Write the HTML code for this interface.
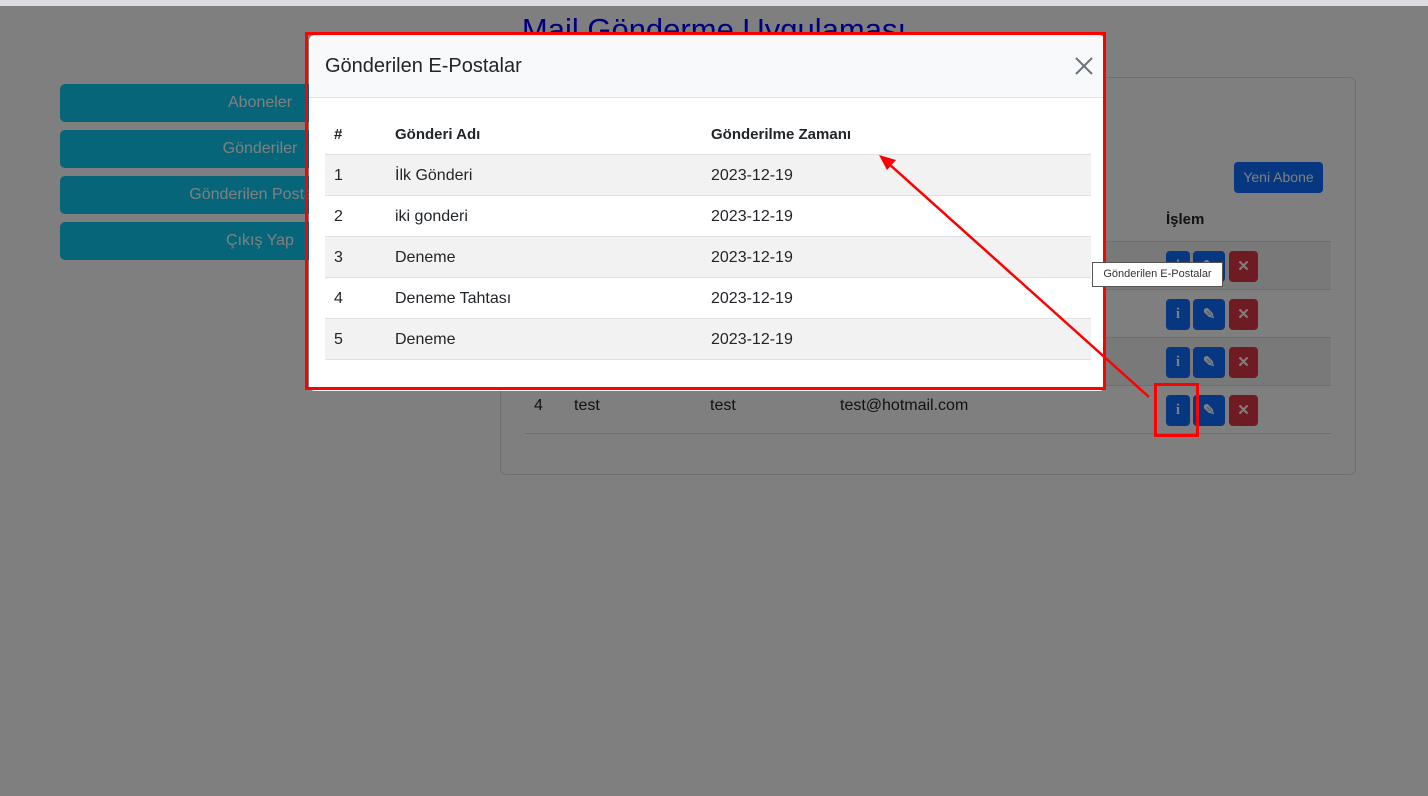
<!DOCTYPE html>
<html><head><meta charset="utf-8"><style>
*{box-sizing:border-box;margin:0;padding:0}
body{width:1428px;height:796px;overflow:hidden;background:#7f7f7f;font-family:"Liberation Sans",sans-serif;position:relative;color:#212529}
.a{position:absolute}
.topbar{left:0;top:0;width:1428px;height:6px;background:#dadce0;z-index:20}
.title{top:12px;left:0;width:1428px;text-align:center;font-size:31px;color:#000080}
.sb{left:60px;width:400px;height:38px;background:#07657a;border-radius:5px;color:#808080;font-size:16px;text-align:center;line-height:38px}
.card{left:500px;top:77px;width:856px;height:398px;border:1px solid #6f6f6f;border-radius:6px}
.btn{height:31px;border-radius:4px;color:#808080;text-align:center;line-height:31px;font-weight:bold;font-size:15px}
.row{left:525px;width:806px;height:48px;border-bottom:1px solid #6f6f6f}
.modal{left:309px;top:35px;width:796px;height:356px;background:#fff;border-radius:6px;overflow:hidden}
.mh{height:63px;background:#f8f9fa;border-bottom:1px solid #dee2e6;position:relative}
.mh span{position:absolute;left:16px;top:20px;font-size:20px;color:#212529}
.mt{position:absolute;left:16px;top:79px;width:766px;font-size:16px}
.tr{height:41px;border-bottom:1px solid #dee2e6;position:relative;line-height:41px}
.tr.s{background:#f2f2f2}
.tr span{position:absolute}
.c1{left:9px}.c2{left:70px}.c3{left:386px}
.th{font-weight:bold;font-size:15px}
.bl{background:#073780}.rd{background:#6e1b23}
</style></head><body>
<div class="a topbar"></div>
<div class="a title">Mail Gönderme Uygulaması</div>
<div class="a sb" style="top:84px">Aboneler</div>
<div class="a sb" style="top:130px">Gönderiler</div>
<div class="a sb" style="top:176px">Gönderilen Postalar</div>
<div class="a sb" style="top:222px">Çıkış Yap</div>
<div class="a card"></div>
<div class="a btn bl" style="left:1234px;top:162px;width:89px;font-weight:normal;font-size:14px">Yeni Abone</div>
<div class="a" style="left:1166px;top:211px;font-weight:bold;font-size:15px;color:#111">İşlem</div>
<div class="a" style="left:525px;top:241px;width:806px;height:1px;background:#6f6f6f"></div>
<div class="a row" style="top:242px;background:#797979"></div>
<div class="a row" style="top:290px"></div>
<div class="a row" style="top:338px;background:#797979"></div>
<div class="a row" style="top:386px"></div>
<div class="a" style="left:534px;top:397px;font-size:16px;color:#111">4</div>
<div class="a" style="left:574px;top:397px;font-size:16px;color:#111">test</div>
<div class="a" style="left:710px;top:397px;font-size:16px;color:#111">test</div>
<div class="a" style="left:840px;top:397px;font-size:16px;color:#111">test@hotmail.com</div>
<div class="a" style="left:1166px;top:251px">
<div class="a btn bl" style="left:0;top:0;width:24px;font-family:'Liberation Serif',serif">i</div>
<div class="a btn bl" style="left:27px;top:0;width:32px">✎</div>
<div class="a btn rd" style="left:63px;top:0;width:29px">✕</div>
<div class="a btn bl" style="left:0;top:48px;width:24px;font-family:'Liberation Serif',serif">i</div>
<div class="a btn bl" style="left:27px;top:48px;width:32px">✎</div>
<div class="a btn rd" style="left:63px;top:48px;width:29px">✕</div>
<div class="a btn bl" style="left:0;top:96px;width:24px;font-family:'Liberation Serif',serif">i</div>
<div class="a btn bl" style="left:27px;top:96px;width:32px">✎</div>
<div class="a btn rd" style="left:63px;top:96px;width:29px">✕</div>
<div class="a btn bl" style="left:0;top:144px;width:24px;font-family:'Liberation Serif',serif">i</div>
<div class="a btn bl" style="left:27px;top:144px;width:32px">✎</div>
<div class="a btn rd" style="left:63px;top:144px;width:29px">✕</div>
</div>
<div class="a modal">
<div class="mh"><span>Gönderilen E-Postalar</span>
<svg class="a" style="left:766px;top:22px" width="18" height="18"><path d="M1 1L17 17M17 1L1 17" stroke="#6c757d" stroke-width="2"/></svg></div>
<div class="mt">
<div class="tr th"><span class="c1">#</span><span class="c2">Gönderi Adı</span><span class="c3">Gönderilme Zamanı</span></div>
<div class="tr s"><span class="c1">1</span><span class="c2">İlk Gönderi</span><span class="c3">2023-12-19</span></div>
<div class="tr"><span class="c1">2</span><span class="c2">iki gonderi</span><span class="c3">2023-12-19</span></div>
<div class="tr s"><span class="c1">3</span><span class="c2">Deneme</span><span class="c3">2023-12-19</span></div>
<div class="tr"><span class="c1">4</span><span class="c2">Deneme Tahtası</span><span class="c3">2023-12-19</span></div>
<div class="tr s"><span class="c1">5</span><span class="c2">Deneme</span><span class="c3">2023-12-19</span></div>
</div>
</div>
<div class="a" style="left:305px;top:32px;width:801px;height:358px;border:3px solid #ff0000"></div>
<div class="a" style="left:1154px;top:383px;width:45px;height:54px;border:3px solid #ff0000"></div>
<div class="a" style="left:1092px;top:262px;width:131px;height:25px;background:#fff;border:1px solid #555;font-size:11px;line-height:23px;text-align:center;color:#333">Gönderilen E-Postalar</div>
<svg class="a" style="left:0;top:0" width="1428" height="796"><line x1="1149" y1="397" x2="888" y2="163" stroke="#ff0000" stroke-width="2.5"/><path d="M879 155L896 160L887 170Z" fill="#ff0000"/></svg>
</body></html>
